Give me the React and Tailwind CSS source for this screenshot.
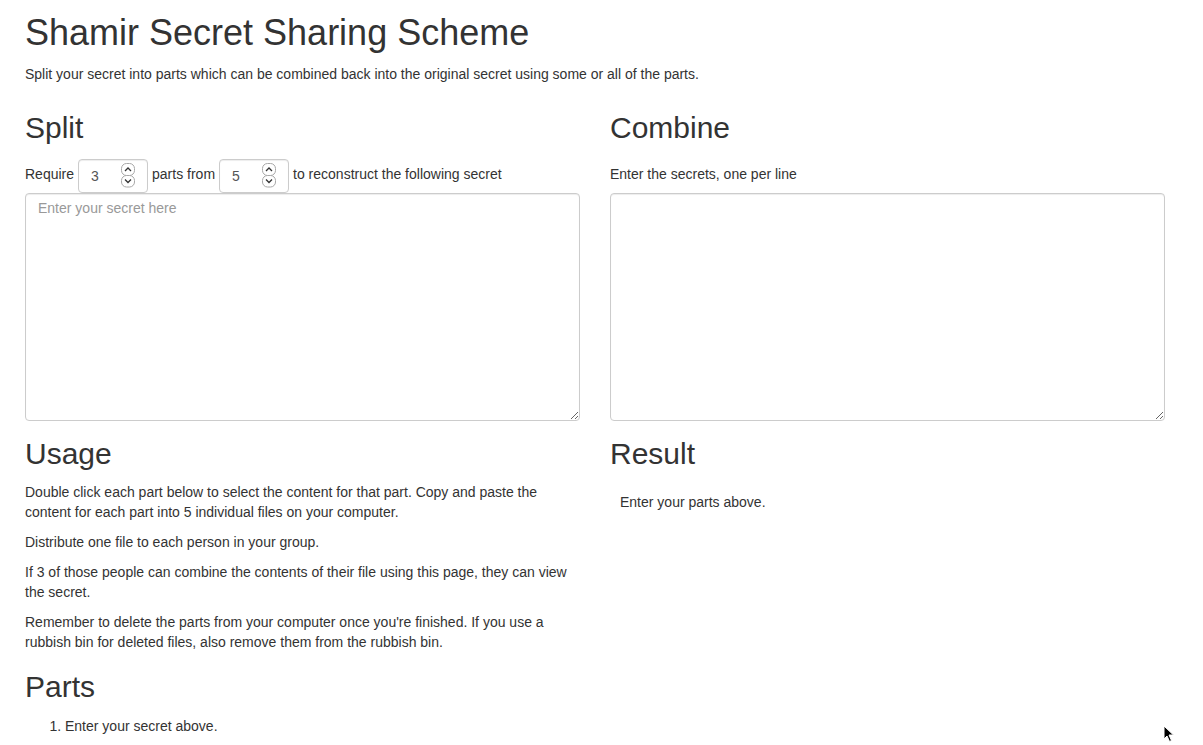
import React from "react";

const font = { fontFamily: '"Liberation Sans", Arial, sans-serif' };

const fieldClass =
  "border border-[#ccc] rounded-[4px] bg-white text-[14px] text-[#555] shadow-[inset_0_1px_1px_rgba(0,0,0,0.075)] outline-none";

const Spinner = () => (
  <svg
    className="absolute left-[43px] top-[4px] pointer-events-none"
    width="15"
    height="25"
    viewBox="0 0 15 25"
  >
    <rect x="0.5" y="0.5" width="13" height="12" rx="5" fill="#fff" stroke="#a8a8a8" />
    <rect x="0.5" y="12.5" width="13" height="11.5" rx="5" fill="#fff" stroke="#a8a8a8" />
    <path d="M4 8 L7 5 L10 8" fill="none" stroke="#333" strokeWidth="1.3" />
    <path d="M4 16.5 L7 19.5 L10 16.5" fill="none" stroke="#333" strokeWidth="1.3" />
  </svg>
);

const NumberField = ({ value }) => (
  <div className="relative">
    <input
      type="number"
      defaultValue={value}
      className={`${fieldClass} w-[70px] h-[34px] px-[12px] py-[6px] [appearance:textfield] [&::-webkit-inner-spin-button]:appearance-none [&::-webkit-outer-spin-button]:appearance-none`}
    />
    <Spinner />
  </div>
);

const App = () => {
  return (
    <div
      className="min-h-screen bg-white text-[#333] text-[14px] leading-[20px] relative"
      style={font}
    >
      <div className="w-[1140px] ml-[25px]">
        <h1 className="text-[36px] leading-[1.1] pt-[13px] mb-[11px]">
          Shamir Secret Sharing Scheme
        </h1>
        <p>
          Split your secret into parts which can be combined back into the
          original secret using some or all of the parts.
        </p>

        <div className="grid grid-cols-2 gap-x-[30px] mt-[27px]">
          {/* Split */}
          <div>
            <h2 className="text-[30px] leading-[1.1] mb-[15px]">Split</h2>
            <div className="flex items-start gap-[4px] h-[34px]">
              <span className="pt-[5px]">Require</span>
              <NumberField value={3} />
              <span className="pt-[5px]">parts from</span>
              <NumberField value={5} />
              <span className="pt-[5px]">to reconstruct the following secret</span>
            </div>
            <textarea
              placeholder="Enter your secret here"
              className={`${fieldClass} block w-full h-[228px] px-[12px] pt-[4px] pb-[6px] placeholder:text-[#999]`}
            />
          </div>

          {/* Combine */}
          <div>
            <h2 className="text-[30px] leading-[1.1] mb-[15px]">Combine</h2>
            <div className="h-[34px] pt-[5px]">Enter the secrets, one per line</div>
            <textarea
              className={`${fieldClass} block w-full h-[228px] px-[12px] pt-[4px] pb-[6px]`}
            />
          </div>

          {/* Usage */}
          <div className="mt-[16px]">
            <h2 className="text-[30px] leading-[1.1] mb-[12px]">Usage</h2>
            <div className="flex flex-col gap-[10px]">
              <p>
                Double click each part below to select the content for that
                part. Copy and paste the content for each part into 5
                individual files on your computer.
              </p>
              <p>Distribute one file to each person in your group.</p>
              <p>
                If 3 of those people can combine the contents of their file
                using this page, they can view the secret.
              </p>
              <p>
                Remember to delete the parts from your computer once you're
                finished. If you use a rubbish bin for deleted files, also
                remove them from the rubbish bin.
              </p>
            </div>
            <h2 className="text-[30px] leading-[1.1] mt-[18px] mb-[13px]">
              Parts
            </h2>
            <ol className="list-decimal pl-[40px]">
              <li>Enter your secret above.</li>
            </ol>
          </div>

          {/* Result */}
          <div className="mt-[16px]">
            <h2 className="text-[30px] leading-[1.1] mb-[12px]">Result</h2>
            <div className="p-[10px]">Enter your parts above.</div>
          </div>
        </div>
      </div>

      {/* mouse pointer */}
      <svg
        className="absolute left-[1163px] top-[725px]"
        width="12"
        height="18"
        viewBox="0 0 12 18"
      >
        <path
          d="M1 1 L1 14 L4 11 L6.5 16.5 L8.5 15.5 L6 10 L10.5 10 Z"
          fill="#000"
          stroke="#fff"
          strokeWidth="1"
        />
      </svg>
    </div>
  );
};

export default App;
